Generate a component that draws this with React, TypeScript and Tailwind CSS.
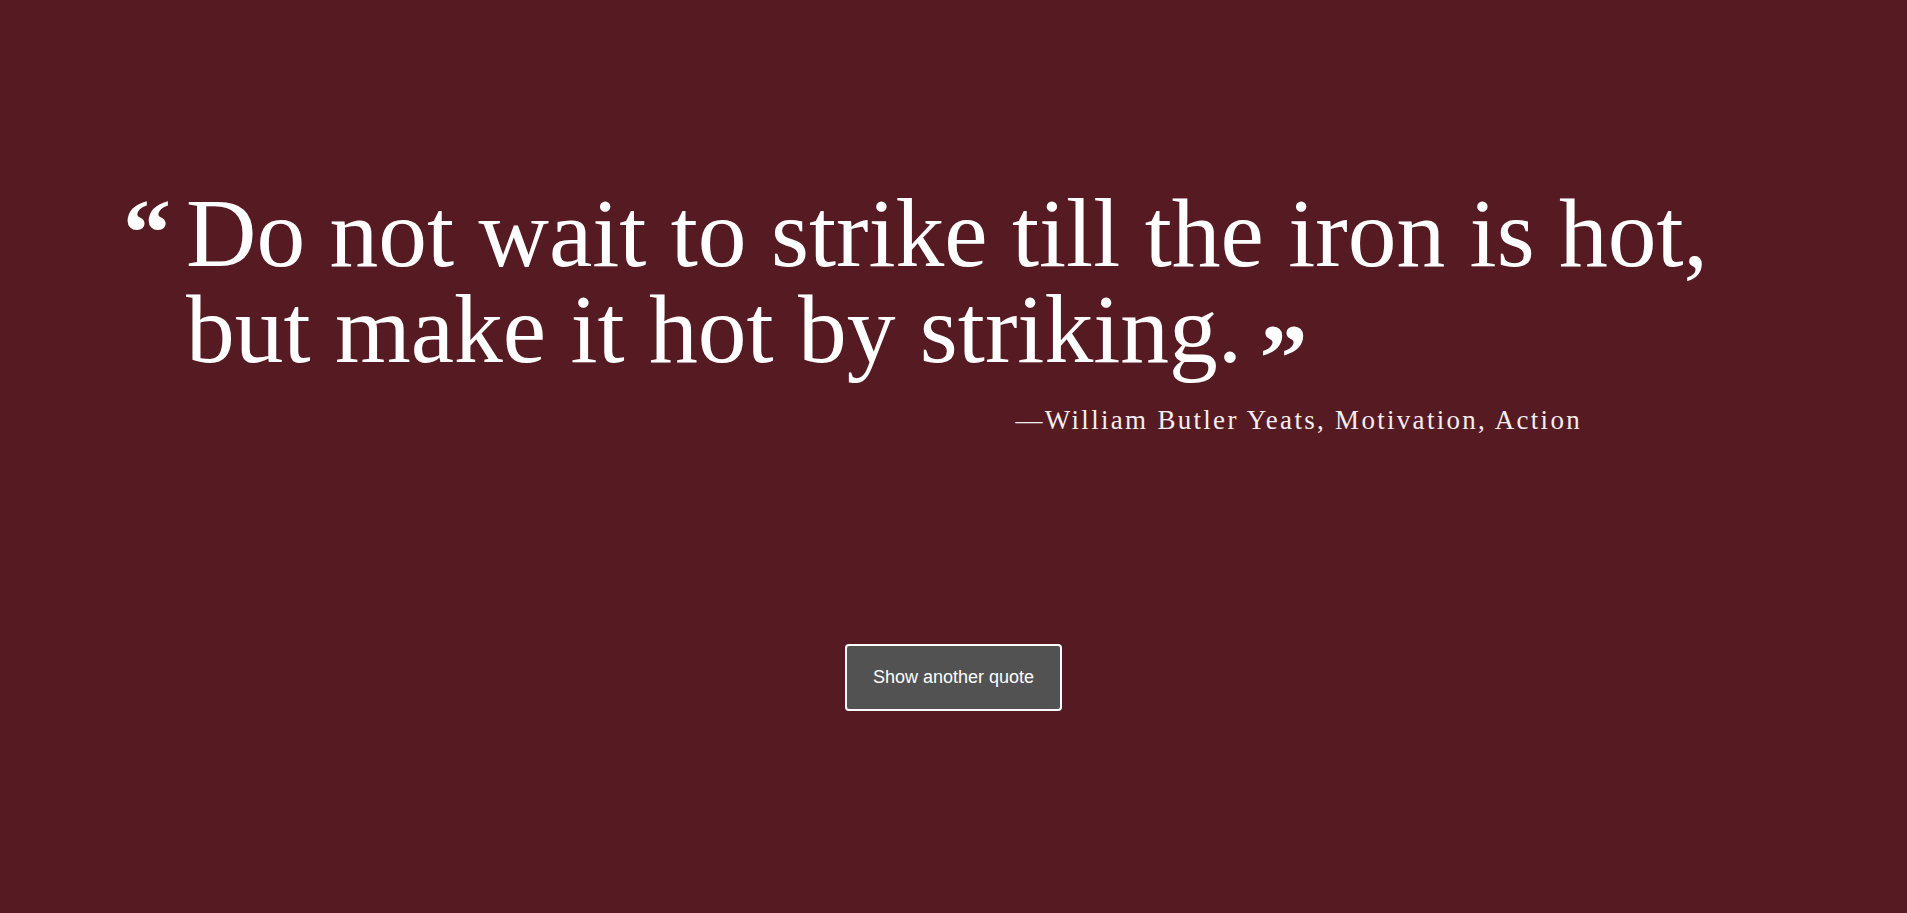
const App = () => {
  return (
    <main className="min-h-screen w-full bg-[#561b22] text-white flex flex-col">
      <blockquote className="pt-[185px] pl-[123px] flex flex-col font-['Liberation_Serif',serif]">
        <div className="flex items-start">
          <span className="w-[63px] text-[96px] leading-[96px] font-bold">&ldquo;</span>
          <p className="text-[97.5px] leading-[96px]">
            Do not wait to strike till the iron is hot,
            <br />
            but make it hot by striking.{" "}
            <span className="-ml-[7px] font-bold align-[-28px] text-[96px]">&rdquo;</span>
          </p>
        </div>
        <footer className="w-[1459px] text-right text-[27px] leading-[28px] tracking-[2.3px] text-[#f4eeee]">
          &mdash;William Butler Yeats, Motivation, Action
        </footer>
      </blockquote>

      <div className="mt-[210px] flex justify-center">
        <button className="h-[67px] px-[26px] rounded-[4px] border-2 border-white bg-[#525252] text-white text-[18px] font-['Liberation_Sans',Arial,sans-serif]">
          Show another quote
        </button>
      </div>
    </main>
  );
};

export default App;
